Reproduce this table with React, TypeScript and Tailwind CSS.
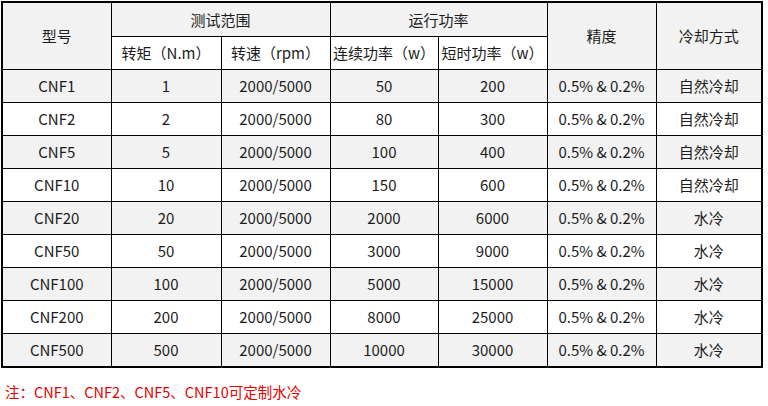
import React from "react";

const rows = [
  ["CNF1", "1", "2000/5000", "50", "200", "自然冷却"],
  ["CNF2", "2", "2000/5000", "80", "300", "自然冷却"],
  ["CNF5", "5", "2000/5000", "100", "400", "自然冷却"],
  ["CNF10", "10", "2000/5000", "150", "600", "自然冷却"],
  ["CNF20", "20", "2000/5000", "2000", "6000", "水冷"],
  ["CNF50", "50", "2000/5000", "3000", "9000", "水冷"],
  ["CNF100", "100", "2000/5000", "5000", "15000", "水冷"],
  ["CNF200", "200", "2000/5000", "8000", "25000", "水冷"],
  ["CNF500", "500", "2000/5000", "10000", "30000", "水冷"],
];

const cell = "border border-black text-center align-middle p-0";

export default function App() {
  return (
    <div
      className="w-[768px] h-[406px] bg-white text-[#1c1c1c] text-[15px] leading-none"
      style={{ fontFamily: '"Noto Sans CJK SC", "Noto Sans", sans-serif' }}
    >
      <div className="pt-[1px] pl-[1px]">
        <div className="w-[762px] border-2 border-black">
          <table className="w-[758px] table-fixed border-collapse border-hidden">
            <colgroup>
              <col className="w-[108px]" />
              <col className="w-[110px]" />
              <col className="w-[109px]" />
              <col className="w-[108px]" />
              <col className="w-[109px]" />
              <col className="w-[109px]" />
              <col className="w-[105px]" />
            </colgroup>
            <thead>
              <tr className="h-[33px] bg-[#f2f2f2]">
                <th rowSpan={2} className={`${cell} font-normal`}>型号</th>
                <th colSpan={2} className={`${cell} font-normal`}>测试范围</th>
                <th colSpan={2} className={`${cell} font-normal`}>运行功率</th>
                <th rowSpan={2} className={`${cell} font-normal`}>精度</th>
                <th rowSpan={2} className={`${cell} font-normal`}>冷却方式</th>
              </tr>
              <tr className="h-[33px] bg-white">
                <th className={`${cell} font-normal`}>转矩（N.m）</th>
                <th className={`${cell} font-normal`}>转速（rpm）</th>
                <th className={`${cell} font-normal`}>连续功率（w）</th>
                <th className={`${cell} font-normal`}>短时功率（w）</th>
              </tr>
            </thead>
            <tbody>
              {rows.map((r, i) => (
                <tr key={r[0]} className={`h-[33px] ${i % 2 === 0 ? "bg-[#f2f2f2]" : "bg-white"}`}>
                  <td className={cell}>{r[0]}</td>
                  <td className={cell}>{r[1]}</td>
                  <td className={cell}>{r[2]}</td>
                  <td className={cell}>{r[3]}</td>
                  <td className={cell}>{r[4]}</td>
                  <td className={cell}>0.5% &amp; 0.2%</td>
                  <td className={cell}>{r[5]}</td>
                </tr>
              ))}
            </tbody>
          </table>
        </div>
      </div>
      <div className="mt-[17px] pl-[5px] text-[14.5px] text-[#e60000]">
        注：CNF1、CNF2、CNF5、CNF10可定制水冷
      </div>
    </div>
  );
}
